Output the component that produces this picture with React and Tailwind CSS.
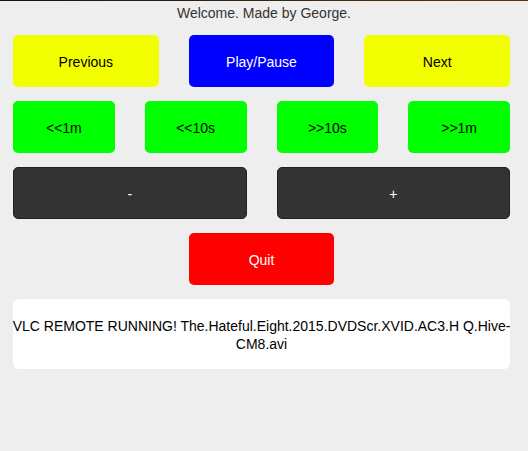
import React from 'react';

const Btn = ({ label, className }) => (
  <button className={`h-[52px] pt-[3px] rounded-[5px] text-[14px] ${className}`}>{label}</button>
);

const App = () => {
  return (
    <div className="min-h-[451px] bg-[#eeeeee] font-['Liberation_Sans',Arial,sans-serif]">
      {/* top strip from the background image */}
      <div className="h-px bg-gradient-to-r from-[#1b1208] via-[#3a2410] to-[#5a3410]" />
      <p className="text-center text-[14px] text-[#333333] leading-[24px]">Welcome. Made by George.</p>

      <div className="w-[497px] ml-[13px] mt-[10px] flex flex-col gap-[14px]">
        <div className="grid grid-cols-3 gap-[30px]">
          <Btn label="Previous" className="bg-[#f2ff00] text-black" />
          <Btn label="Play/Pause" className="bg-[#0000ff] text-white" />
          <Btn label="Next" className="bg-[#f2ff00] text-black" />
        </div>

        <div className="grid grid-cols-4 gap-[30px]">
          <Btn label="<<1m" className="bg-[#00ff00] text-black" />
          <Btn label="<<10s" className="bg-[#00ff00] text-black" />
          <Btn label=">>10s" className="bg-[#00ff00] text-black" />
          <Btn label=">>1m" className="bg-[#00ff00] text-black" />
        </div>

        <div className="grid grid-cols-2 gap-[30px]">
          <Btn label="-" className="bg-[#333333] border border-[#222222] text-white" />
          <Btn label="+" className="bg-[#333333] border border-[#222222] text-white" />
        </div>

        <div className="grid grid-cols-3 gap-[30px]">
          <div />
          <Btn label="Quit" className="bg-[#ff0000] text-white" />
          <div />
        </div>

        <div className="h-[70px] pt-[2px] bg-white rounded-[6px] flex items-center justify-center text-center text-[14px] leading-[18px] text-black">
          <p className="whitespace-nowrap">
            VLC REMOTE RUNNING! The.Hateful.Eight.2015.DVDScr.XVID.AC3.H Q.Hive-
            <br />
            CM8.avi
          </p>
        </div>
      </div>
    </div>
  );
};

export default App;
